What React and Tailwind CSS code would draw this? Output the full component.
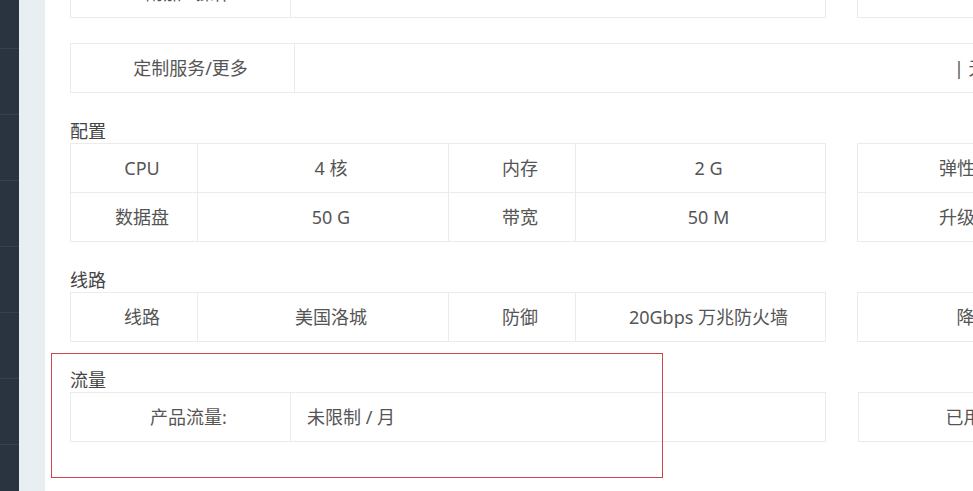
export default function App() {
  const font = "font-['Noto_Sans','Noto_Sans_CJK_SC',sans-serif]";
  return (
    <div className={`flex h-[491px] w-[973px] overflow-hidden bg-white text-[18px] text-[#555] ${font}`}>
      {/* sidebar */}
      <div className="flex w-[19px] shrink-0 flex-col bg-[#2a3340]">
        <div className="mt-[-17px] flex flex-col">
          <div className="h-[66px] border-b border-[#36404d]" />
          <div className="h-[66px] border-b border-[#36404d]" />
          <div className="h-[66px] border-b border-[#36404d]" />
          <div className="h-[66px] border-b border-[#36404d]" />
          <div className="h-[66px] border-b border-[#36404d]" />
          <div className="h-[66px] border-b border-[#36404d]" />
          <div className="h-[66px] border-b border-[#36404d]" />
          <div className="h-[66px] border-b border-[#36404d]" />
        </div>
      </div>
      <div className="w-[26px] shrink-0 bg-[#e9eef3]" />
      {/* content */}
      <div className="relative min-w-0 flex-1 overflow-hidden bg-white pl-[25px]">
        <div className="flex w-[1543px] flex-col">
          {/* top split row (cut off) */}
          <div className="mt-[-32px] flex gap-[31px]">
            <div className="w-[756px] shrink-0 border border-[#ebebeb]">
              <div className="flex h-[48px]">
                <div className="flex w-[220px] items-center justify-center border-r border-[#ebebeb] pl-4">附加 · 操作</div>
                <div className="flex-1" />
              </div>
            </div>
            <div className="w-[756px] shrink-0 border border-[#ebebeb]">
              <div className="flex h-[48px]">
                <div className="flex w-[200px] items-center justify-center border-r border-[#ebebeb] pl-4">IPv4</div>
                <div className="flex-1" />
              </div>
            </div>
          </div>

          {/* custom service */}
          <div className="mt-[25px] border border-[#ebebeb]">
            <div className="flex h-[48px]">
              <div className="flex w-[224px] items-center justify-center border-r border-[#ebebeb] pl-4">定制服务/更多</div>
              <div className="flex flex-1 items-center pl-[659px]">| 无</div>
            </div>
          </div>

          {/* 配置 */}
          <div className="mt-[26px] h-[24px] leading-[24px] text-[#444]">配置</div>
          <div className="flex gap-[31px]">
            <div className="w-[756px] shrink-0 border border-[#ebebeb]">
              <div className="flex h-[48px]">
                <div className="flex w-[127px] items-center justify-center border-r border-[#ebebeb] pl-4">CPU</div>
                <div className="flex w-[251px] items-center justify-center border-r border-[#ebebeb] pl-4">4 核</div>
                <div className="flex w-[127px] items-center justify-center border-r border-[#ebebeb] pl-4">内存</div>
                <div className="flex flex-1 items-center justify-center pl-4">2 G</div>
              </div>
              <div className="flex h-[49px] border-t border-[#ebebeb]">
                <div className="flex w-[127px] items-center justify-center border-r border-[#ebebeb] pl-4">数据盘</div>
                <div className="flex w-[251px] items-center justify-center border-r border-[#ebebeb] pl-4">50 G</div>
                <div className="flex w-[127px] items-center justify-center border-r border-[#ebebeb] pl-4">带宽</div>
                <div className="flex flex-1 items-center justify-center pl-4">50 M</div>
              </div>
            </div>
            <div className="w-[756px] shrink-0 border border-[#ebebeb]">
              <div className="flex h-[48px]">
                <div className="flex w-[200px] items-center justify-center border-r border-[#ebebeb] pl-4">弹性IP</div>
                <div className="flex flex-1 items-center justify-center pl-4">0 个</div>
              </div>
              <div className="flex h-[49px] border-t border-[#ebebeb]">
                <div className="flex w-[200px] items-center justify-center border-r border-[#ebebeb] pl-4">升级IP</div>
                <div className="flex flex-1 items-center justify-center pl-4">支持</div>
              </div>
            </div>
          </div>

          {/* 线路 */}
          <div className="mt-[26px] h-[24px] leading-[24px] text-[#444]">线路</div>
          <div className="flex gap-[31px]">
            <div className="w-[756px] shrink-0 border border-[#ebebeb]">
              <div className="flex h-[48px]">
                <div className="flex w-[127px] items-center justify-center border-r border-[#ebebeb] pl-4">线路</div>
                <div className="flex w-[251px] items-center justify-center border-r border-[#ebebeb] pl-4">美国洛城</div>
                <div className="flex w-[127px] items-center justify-center border-r border-[#ebebeb] pl-4">防御</div>
                <div className="flex flex-1 items-center justify-center pl-4">20Gbps 万兆防火墙</div>
              </div>
            </div>
            <div className="w-[756px] shrink-0 border border-[#ebebeb]">
              <div className="flex h-[48px]">
                <div className="flex w-[200px] items-center justify-center border-r border-[#ebebeb] pl-4">降</div>
                <div className="flex flex-1 items-center justify-center pl-4">支持</div>
              </div>
            </div>
          </div>

          {/* 流量 */}
          <div className="mt-[26px] h-[24px] leading-[24px] text-[#444]">流量</div>
          <div className="flex gap-[31px]">
            <div className="w-[756px] shrink-0 border border-[#ebebeb]">
              <div className="flex h-[48px]">
                <div className="flex w-[220px] items-center justify-center border-r border-[#ebebeb] pl-4">产品流量:</div>
                <div className="flex flex-1 items-center pl-4">未限制 / 月</div>
              </div>
            </div>
            <div className="ml-px w-[755px] shrink-0 border border-[#ebebeb]">
              <div className="flex h-[48px]">
                <div className="flex w-[199px] items-center justify-center border-r border-[#ebebeb] pl-4">已用:</div>
                <div className="flex flex-1 items-center justify-center pl-4">0 GB</div>
              </div>
            </div>
          </div>
        </div>

        {/* red annotation box */}
        <div className="pointer-events-none absolute left-[6px] top-[353px] h-[125px] w-[612px] border border-[#c9484c]" />
      </div>
    </div>
  );
}
